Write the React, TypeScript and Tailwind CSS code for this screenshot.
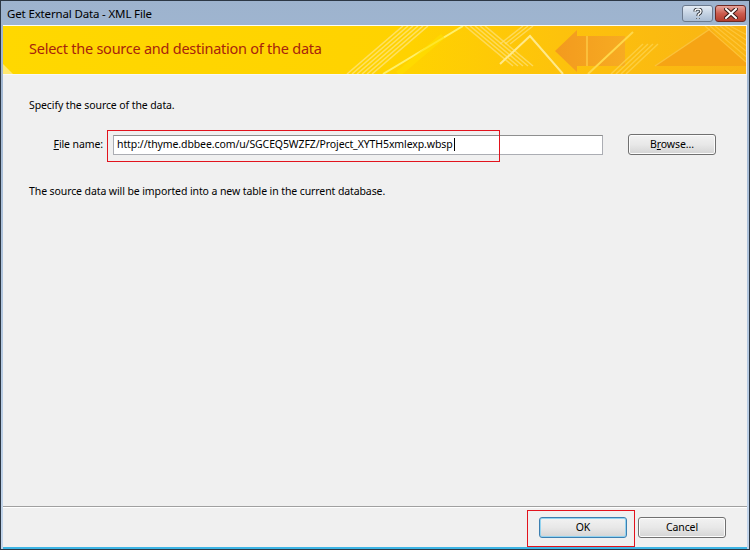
const ui = "font-['Segoe_UI','Noto_Sans',sans-serif]";

function BannerArt() {
  // decorative background of the yellow header strip
  return (
    <svg className="absolute inset-0" width="743" height="48" viewBox="0 0 743 48">
      <defs>
        <linearGradient id="bg" x1="0" y1="0" x2="1" y2="0">
          <stop offset="0" stopColor="#ffd800" />
          <stop offset="0.55" stopColor="#ffd200" />
          <stop offset="0.75" stopColor="#fdc20c" />
          <stop offset="1" stopColor="#f9b414" />
        </linearGradient>
        <linearGradient id="arrow" x1="0" y1="0" x2="1" y2="0">
          <stop offset="0" stopColor="#f39a1e" />
          <stop offset="1" stopColor="#f7ab22" />
        </linearGradient>
      </defs>
      <rect width="743" height="48" fill="url(#bg)" />
      <polygon points="0,38 0,48 10,48" fill="#ffe870" />
      {[0, 5, 10, 15, 20, 25].map((d) => (
        <line key={'a' + d} x1={344 + d} y1="48" x2={400 + d} y2="0" stroke="#ffe680" strokeWidth="1.6" opacity="0.75" />
      ))}
      <line x1="380" y1="48" x2="460" y2="0" stroke="#fff06a" strokeWidth="2" />
      <line x1="395" y1="48" x2="440" y2="10" stroke="#ffe000" strokeWidth="6" opacity="0.6" />
      {[0, 5, 10, 15, 20].map((d) => (
        <line key={'b' + d} x1={462 + d} y1="0" x2={510 + d} y2="40" stroke="#ffe27a" strokeWidth="1.6" opacity="0.7" />
      ))}
      <polyline points="497,38 527,10 560,48" fill="none" stroke="#ffe98a" strokeWidth="2" />
      {[0, 5, 10].map((d) => (
        <line key={'c' + d} x1={497 + d} y1="18" x2={520 + d} y2="0" stroke="#ffe27a" strokeWidth="1.4" opacity="0.7" />
      ))}
      <polygon points="552,25 574,4 574,10 622,10 622,40 574,40 574,46" fill="url(#arrow)" />
      <line x1="584" y1="10" x2="584" y2="40" stroke="#fbbf3a" strokeWidth="2" />
      <line x1="585" y1="48" x2="630" y2="6" stroke="#ffd84a" strokeWidth="2" />
      {[0, 5, 10, 15].map((d) => (
        <line key={'d' + d} x1={608 + d} y1="48" x2={640 + d} y2="18" stroke="#ffd34a" strokeWidth="1.5" opacity="0.8" />
      ))}
      <polygon points="652,40 707,3 743,36 743,40" fill="#f6a414" />
      <line x1="652" y1="40" x2="707" y2="3" stroke="#fbc23a" strokeWidth="1.5" />
      {[0, 5, 10, 15, 20, 25].map((d) => (
        <line key={'e' + d} x1={702 + d} y1="0" x2={743} y2={36 - d * 1.1} stroke="#ffc940" strokeWidth="1.3" opacity="0.8" />
      ))}
    </svg>
  );
}

function Button({ label, underline, isDefault }: { label: string; underline?: number; isDefault?: boolean }) {
  return (
    <div
      className={`w-[88px] h-[21px] rounded-[3px] border flex items-center justify-center text-[10.5px] tracking-[-0.1px] text-black bg-gradient-to-b from-[#f2f2f2] via-[#e8e8e8] to-[#d4d4d4] ${
        isDefault ? 'border-[#3c7fb1] shadow-[inset_0_0_0_1px_#92d3f0]' : 'border-[#707070] shadow-[inset_0_0_0_1px_#fcfcfc]'
      }`}
    >
      {underline === undefined ? (
        label
      ) : (
        <span>
          {label.slice(0, underline)}
          <span className="underline">{label[underline]}</span>
          {label.slice(underline + 1)}
        </span>
      )}
    </div>
  );
}

export default function App() {
  return (
    <div className={`relative w-[750px] h-[550px] flex flex-col bg-gradient-to-b from-[#9db3ce] to-[#c3d6ec] border border-[#2c3744] ${ui}`}>
      {/* title bar */}
      <div className="h-[24px] flex items-start justify-between pl-[6px] pr-[3px]">
        <div className="pt-[4px] text-[11.5px] tracking-[-0.15px] text-black">Get External Data - XML File</div>
        <div className="flex pt-[4px] gap-[2px]">
          <div className="w-[31px] h-[17px] rounded-[3px] border border-[#6b7a8e] bg-gradient-to-b from-[#e4ecf5] via-[#c5d3e3] to-[#a9bcd3] flex items-center justify-center">
            <svg width="10" height="12" viewBox="0 0 10 12">
              <path d="M2 3.5 Q2 1 5 1 Q8 1 8 3.5 Q8 5 6 6 Q5 6.5 5 8 M5 10 L5 11" fill="none" stroke="#2a3038" strokeWidth="3.2" />
              <path d="M2 3.5 Q2 1 5 1 Q8 1 8 3.5 Q8 5 6 6 Q5 6.5 5 8 M5 10 L5 11" fill="none" stroke="#ffffff" strokeWidth="1.4" />
            </svg>
          </div>
          <div className="w-[31px] h-[17px] rounded-[3px] border border-[#6e2a24] bg-gradient-to-b from-[#e6a49b] via-[#cc5c4f] to-[#b33c2e] flex items-center justify-center">
            <svg width="14" height="11" viewBox="0 0 14 11">
              <path d="M2 1 L12 10 M12 1 L2 10" stroke="#3a1a16" strokeWidth="4" strokeLinecap="square" />
              <path d="M2 1 L12 10 M12 1 L2 10" stroke="#ffffff" strokeWidth="2" strokeLinecap="square" />
            </svg>
          </div>
        </div>
      </div>

      {/* client area */}
      <div className="flex-1 flex flex-col mx-[2px] border-b-2 border-[#3cb4e4] bg-[#f0f0f0]">
        <div className="relative h-[49px] border-t border-[#fdfdf4] overflow-hidden">
          <BannerArt />
          <div className="relative pl-[26px] pt-[12px] text-[14.5px] text-[#a8240c] tracking-[-0.25px]">
            Select the source and destination of the data
          </div>
        </div>

        <div className="flex-1 flex flex-col border-t border-[#f8f8f8] pl-[26px] pt-[23px] text-[10.5px] tracking-[-0.1px] text-black">
          <div className="h-[14px] leading-[14px]">Specify the source of the data.</div>

          <div className="flex items-center mt-[22px] h-[21px]">
            <div className="w-[84px] text-right pr-[10px]">
              <span className="underline">F</span>ile name:
            </div>
            <div className="w-[490px] h-[20px] bg-white border border-[#abadb3] border-t-[#8e8f8f] flex items-center pl-[3px]">
              http://thyme.dbbee.com/u/SGCEQ5WZFZ/Project_XYTH5xmlexp.wbsp
              <span className="w-px h-[13px] bg-black ml-px" />
            </div>
            <div className="ml-[25px]">
              <Button label="Browse..." underline={1} />
            </div>
          </div>

          <div className="mt-[29px] h-[14px] leading-[14px]">The source data will be imported into a new table in the current database.</div>
        </div>

        <div className="h-[41px] border-t border-[#a0a0a0] shadow-[inset_0_1px_0_#ffffff] flex justify-end items-start pt-[10px] pr-[21px] gap-[11px]">
          <Button label="OK" isDefault />
          <Button label="Cancel" />
        </div>
      </div>

      {/* highlight marks */}
      <div className="absolute left-[106px] top-[129px] w-[393px] h-[32px] border border-[#e2131d]" />
      <div className="absolute left-[526px] top-[509px] w-[108px] h-[37px] border border-[#e2131d]" />
    </div>
  );
}
